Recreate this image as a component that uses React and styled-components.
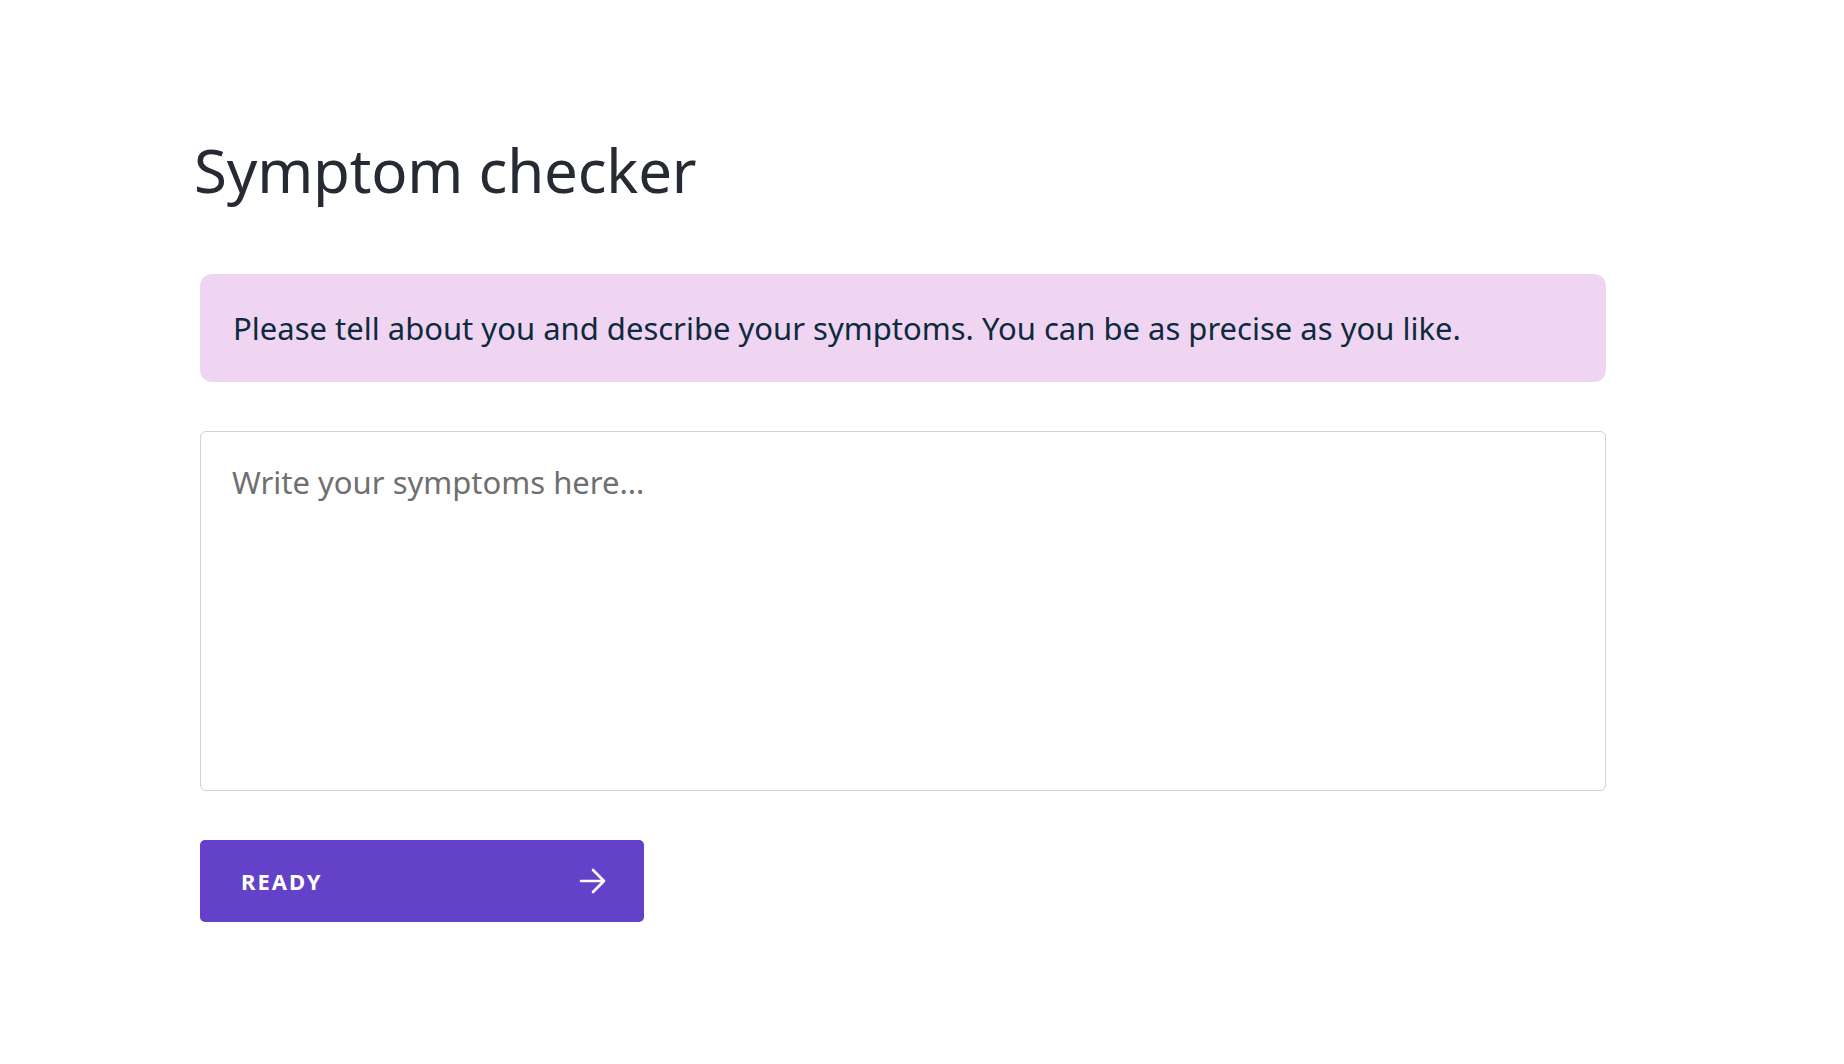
import React from "react";
import styled, { createGlobalStyle } from "styled-components";

const Global = createGlobalStyle`
  html, body { margin: 0; padding: 0; background: #ffffff; }
  body { font-family: "Noto Sans", "Open Sans", sans-serif; }
  * { box-sizing: border-box; }
`;

const Page = styled.main`
  padding: 122px 0 0 200px;
  width: 1606px;
  display: flex;
  flex-direction: column;
`;

const Title = styled.h1`
  margin: 0 0 56px -6px;
  font-size: 60px;
  line-height: 96px;
  font-weight: 400;
  color: #262a33;
  letter-spacing: -0.2px;
`;

const Notice = styled.div`
  background: #f0d5f2;
  border-radius: 12px;
  height: 108px;
  padding: 0 33px;
  display: flex;
  align-items: center;
  font-size: 31px;
  color: #0e2a3e;
`;

const TextArea = styled.textarea`
  margin-top: 49px;
  height: 360px;
  width: 100%;
  resize: none;
  border: 1.5px solid #cdd2dc;
  border-radius: 6px;
  padding: 26px 31px;
  font-family: inherit;
  font-size: 31px;
  line-height: 48px;
  color: #222;
  outline: none;
  &::placeholder { color: #6f6f6f; }
`;

const Button = styled.button`
  margin-top: 49px;
  width: 444px;
  height: 82px;
  background: #6441c9;
  border: none;
  border-radius: 5px;
  display: flex;
  align-items: center;
  justify-content: space-between;
  padding: 0 37px 0 41px;
  color: #ffffff;
  font-family: inherit;
  font-weight: 700;
  font-size: 22px;
  letter-spacing: 2px;
  cursor: pointer;
`;

const Arrow = () => (
  <svg width="28" height="26" viewBox="0 0 28 26" fill="none" stroke="#fff" strokeWidth="2.6" strokeLinecap="round" strokeLinejoin="round">
    <path d="M2 13h23M14 2l11 11-11 11" />
  </svg>
);

export default function App() {
  return (
    <>
      <Global />
      <Page>
        <Title>Symptom checker</Title>
        <Notice>Please tell about you and describe your symptoms. You can be as precise as you like.</Notice>
        <TextArea placeholder="Write your symptoms here..." />
        <Button>
          <span>READY</span>
          <Arrow />
        </Button>
      </Page>
    </>
  );
}
